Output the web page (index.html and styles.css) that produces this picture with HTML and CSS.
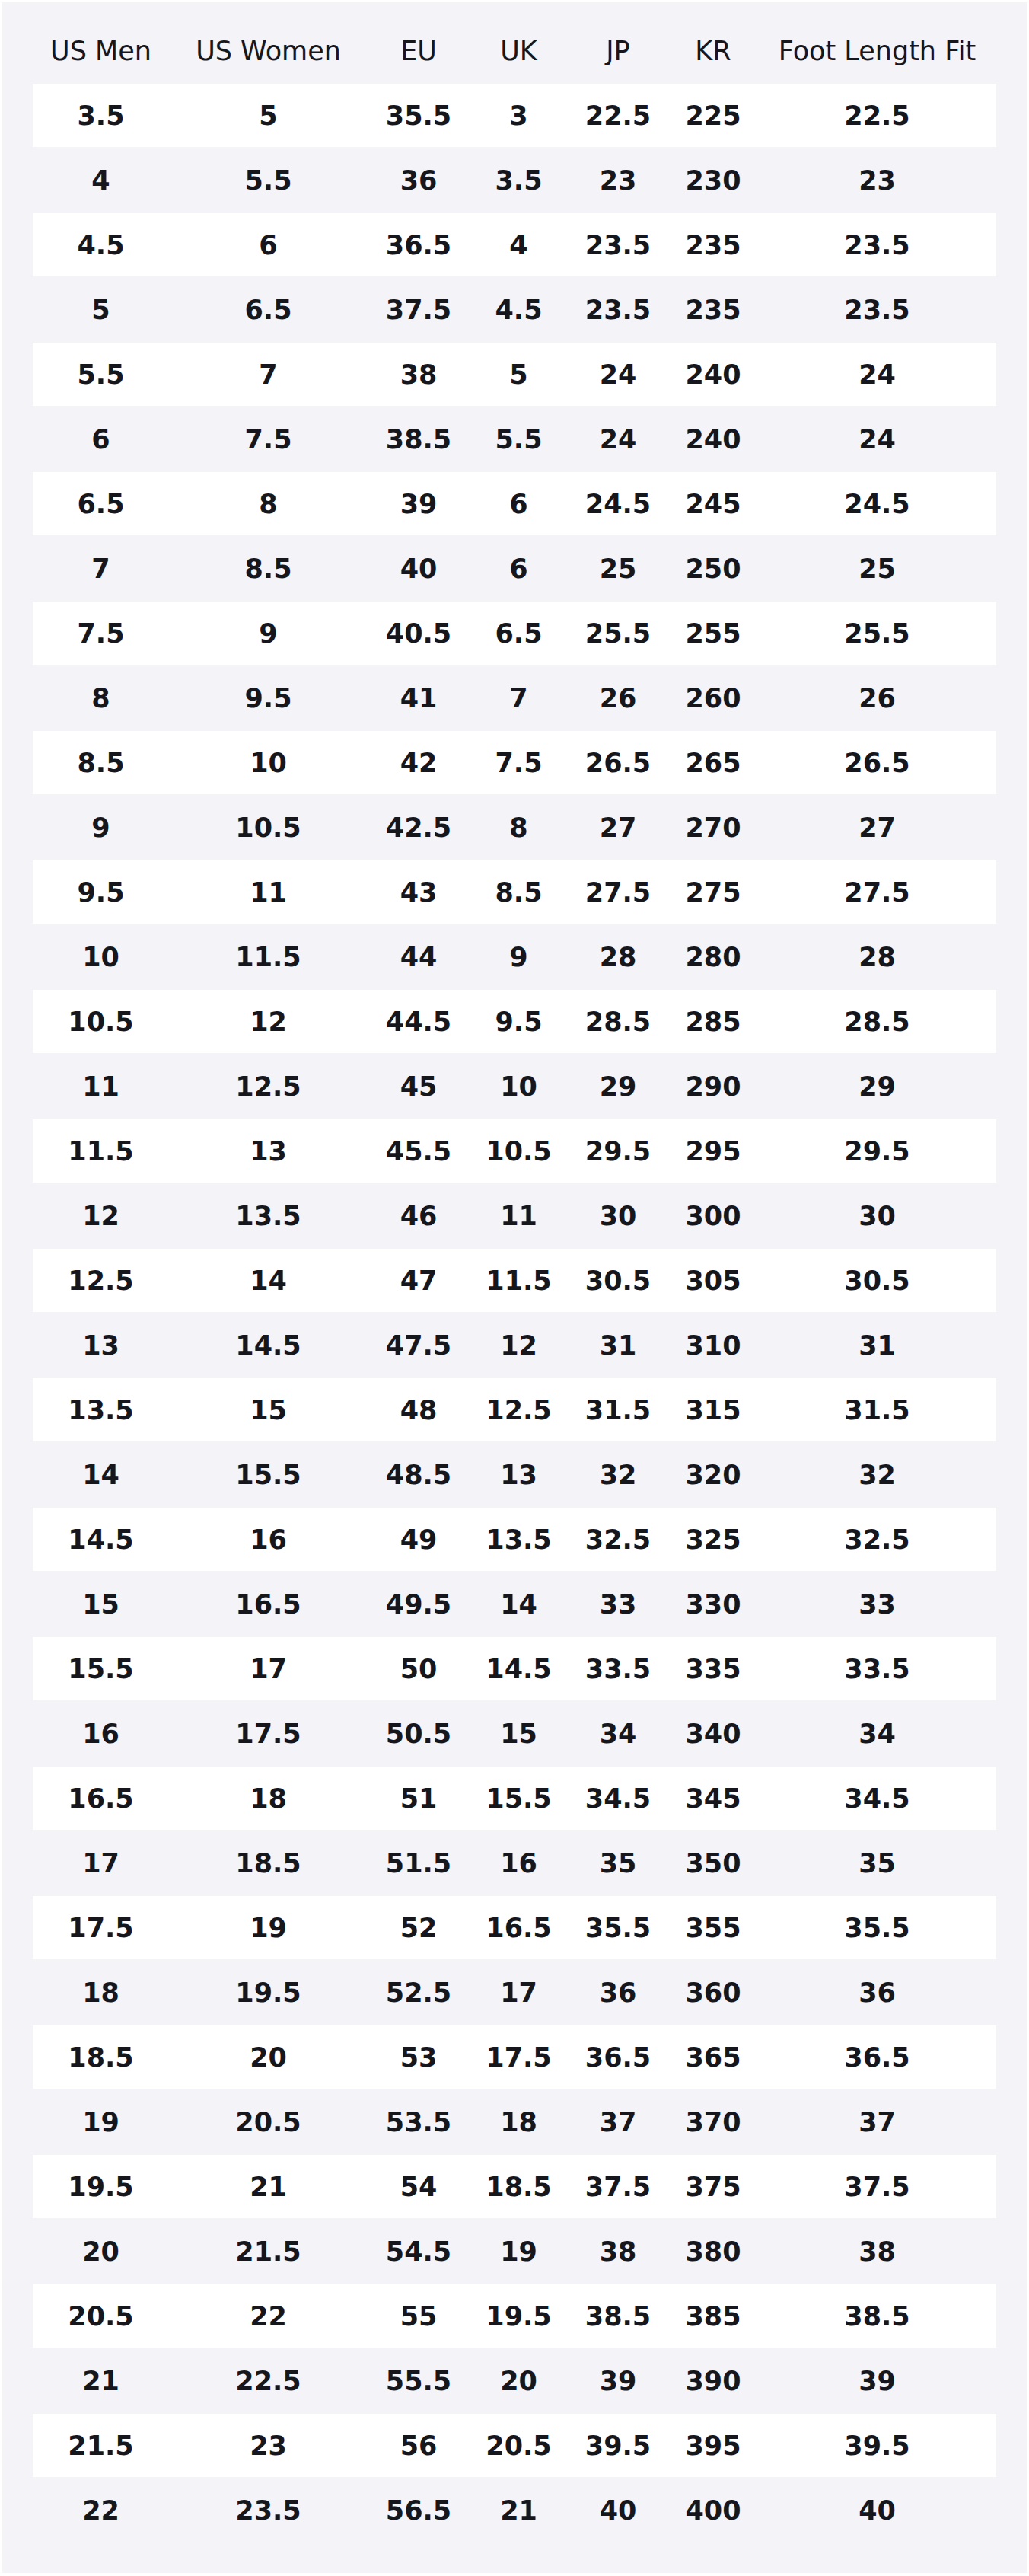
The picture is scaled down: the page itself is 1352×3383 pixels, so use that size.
FILE: index.html
```html
<!DOCTYPE html>
<html lang="en">
<head>
<meta charset="utf-8">
<title>Size Chart</title>
<link rel="stylesheet" href="styles.css">
</head>
<body>
<div class="chart">
<table class="size-table">
<colgroup>
<col class="c1"><col class="c2"><col class="c3"><col class="c4"><col class="c5"><col class="c6"><col class="c7">
</colgroup>
<thead>
<tr><th>US Men</th><th>US Women</th><th>EU</th><th>UK</th><th>JP</th><th>KR</th><th>Foot Length Fit</th></tr>
</thead>
<tbody>
<tr><td>3.5</td><td>5</td><td>35.5</td><td>3</td><td>22.5</td><td>225</td><td>22.5</td></tr>
<tr><td>4</td><td>5.5</td><td>36</td><td>3.5</td><td>23</td><td>230</td><td>23</td></tr>
<tr><td>4.5</td><td>6</td><td>36.5</td><td>4</td><td>23.5</td><td>235</td><td>23.5</td></tr>
<tr><td>5</td><td>6.5</td><td>37.5</td><td>4.5</td><td>23.5</td><td>235</td><td>23.5</td></tr>
<tr><td>5.5</td><td>7</td><td>38</td><td>5</td><td>24</td><td>240</td><td>24</td></tr>
<tr><td>6</td><td>7.5</td><td>38.5</td><td>5.5</td><td>24</td><td>240</td><td>24</td></tr>
<tr><td>6.5</td><td>8</td><td>39</td><td>6</td><td>24.5</td><td>245</td><td>24.5</td></tr>
<tr><td>7</td><td>8.5</td><td>40</td><td>6</td><td>25</td><td>250</td><td>25</td></tr>
<tr><td>7.5</td><td>9</td><td>40.5</td><td>6.5</td><td>25.5</td><td>255</td><td>25.5</td></tr>
<tr><td>8</td><td>9.5</td><td>41</td><td>7</td><td>26</td><td>260</td><td>26</td></tr>
<tr><td>8.5</td><td>10</td><td>42</td><td>7.5</td><td>26.5</td><td>265</td><td>26.5</td></tr>
<tr><td>9</td><td>10.5</td><td>42.5</td><td>8</td><td>27</td><td>270</td><td>27</td></tr>
<tr><td>9.5</td><td>11</td><td>43</td><td>8.5</td><td>27.5</td><td>275</td><td>27.5</td></tr>
<tr><td>10</td><td>11.5</td><td>44</td><td>9</td><td>28</td><td>280</td><td>28</td></tr>
<tr><td>10.5</td><td>12</td><td>44.5</td><td>9.5</td><td>28.5</td><td>285</td><td>28.5</td></tr>
<tr><td>11</td><td>12.5</td><td>45</td><td>10</td><td>29</td><td>290</td><td>29</td></tr>
<tr><td>11.5</td><td>13</td><td>45.5</td><td>10.5</td><td>29.5</td><td>295</td><td>29.5</td></tr>
<tr><td>12</td><td>13.5</td><td>46</td><td>11</td><td>30</td><td>300</td><td>30</td></tr>
<tr><td>12.5</td><td>14</td><td>47</td><td>11.5</td><td>30.5</td><td>305</td><td>30.5</td></tr>
<tr><td>13</td><td>14.5</td><td>47.5</td><td>12</td><td>31</td><td>310</td><td>31</td></tr>
<tr><td>13.5</td><td>15</td><td>48</td><td>12.5</td><td>31.5</td><td>315</td><td>31.5</td></tr>
<tr><td>14</td><td>15.5</td><td>48.5</td><td>13</td><td>32</td><td>320</td><td>32</td></tr>
<tr><td>14.5</td><td>16</td><td>49</td><td>13.5</td><td>32.5</td><td>325</td><td>32.5</td></tr>
<tr><td>15</td><td>16.5</td><td>49.5</td><td>14</td><td>33</td><td>330</td><td>33</td></tr>
<tr><td>15.5</td><td>17</td><td>50</td><td>14.5</td><td>33.5</td><td>335</td><td>33.5</td></tr>
<tr><td>16</td><td>17.5</td><td>50.5</td><td>15</td><td>34</td><td>340</td><td>34</td></tr>
<tr><td>16.5</td><td>18</td><td>51</td><td>15.5</td><td>34.5</td><td>345</td><td>34.5</td></tr>
<tr><td>17</td><td>18.5</td><td>51.5</td><td>16</td><td>35</td><td>350</td><td>35</td></tr>
<tr><td>17.5</td><td>19</td><td>52</td><td>16.5</td><td>35.5</td><td>355</td><td>35.5</td></tr>
<tr><td>18</td><td>19.5</td><td>52.5</td><td>17</td><td>36</td><td>360</td><td>36</td></tr>
<tr><td>18.5</td><td>20</td><td>53</td><td>17.5</td><td>36.5</td><td>365</td><td>36.5</td></tr>
<tr><td>19</td><td>20.5</td><td>53.5</td><td>18</td><td>37</td><td>370</td><td>37</td></tr>
<tr><td>19.5</td><td>21</td><td>54</td><td>18.5</td><td>37.5</td><td>375</td><td>37.5</td></tr>
<tr><td>20</td><td>21.5</td><td>54.5</td><td>19</td><td>38</td><td>380</td><td>38</td></tr>
<tr><td>20.5</td><td>22</td><td>55</td><td>19.5</td><td>38.5</td><td>385</td><td>38.5</td></tr>
<tr><td>21</td><td>22.5</td><td>55.5</td><td>20</td><td>39</td><td>390</td><td>39</td></tr>
<tr><td>21.5</td><td>23</td><td>56</td><td>20.5</td><td>39.5</td><td>395</td><td>39.5</td></tr>
<tr><td>22</td><td>23.5</td><td>56.5</td><td>21</td><td>40</td><td>400</td><td>40</td></tr>
</tbody>
</table>
</div>
</body>
</html>
```

FILE: styles.css
```css
html, body {
  background: #ffffff;
}

body {
  margin: 3px 3px 4px 3px;
  font-family: "DejaVu Sans", "Liberation Sans", sans-serif;
  color: #16161d;
}

.chart {
  background: #f3f3f8;
  padding: 20px 40px 39px 40px;
}

.size-table {
  width: 100%;
  table-layout: fixed;
  border-collapse: separate;
  border-spacing: 0 2px;
}

.size-table col.c1 { width: 179px; }
.size-table col.c2 { width: 261px; }
.size-table col.c3 { width: 134px; }
.size-table col.c4 { width: 129px; }
.size-table col.c5 { width: 132px; }
.size-table col.c6 { width: 118px; }
.size-table col.c7 { width: 313px; }

.size-table th,
.size-table td {
  height: 83px;
  padding: 0;
  text-align: center;
  vertical-align: middle;
  font-size: 35px;
  white-space: nowrap;
}

.size-table th {
  font-weight: normal;
  color: #16161d;
}

.size-table td {
  font-weight: bold;
  color: #16161d;
}

.size-table tbody tr:nth-child(odd) td {
  background: #ffffff;
}
```
